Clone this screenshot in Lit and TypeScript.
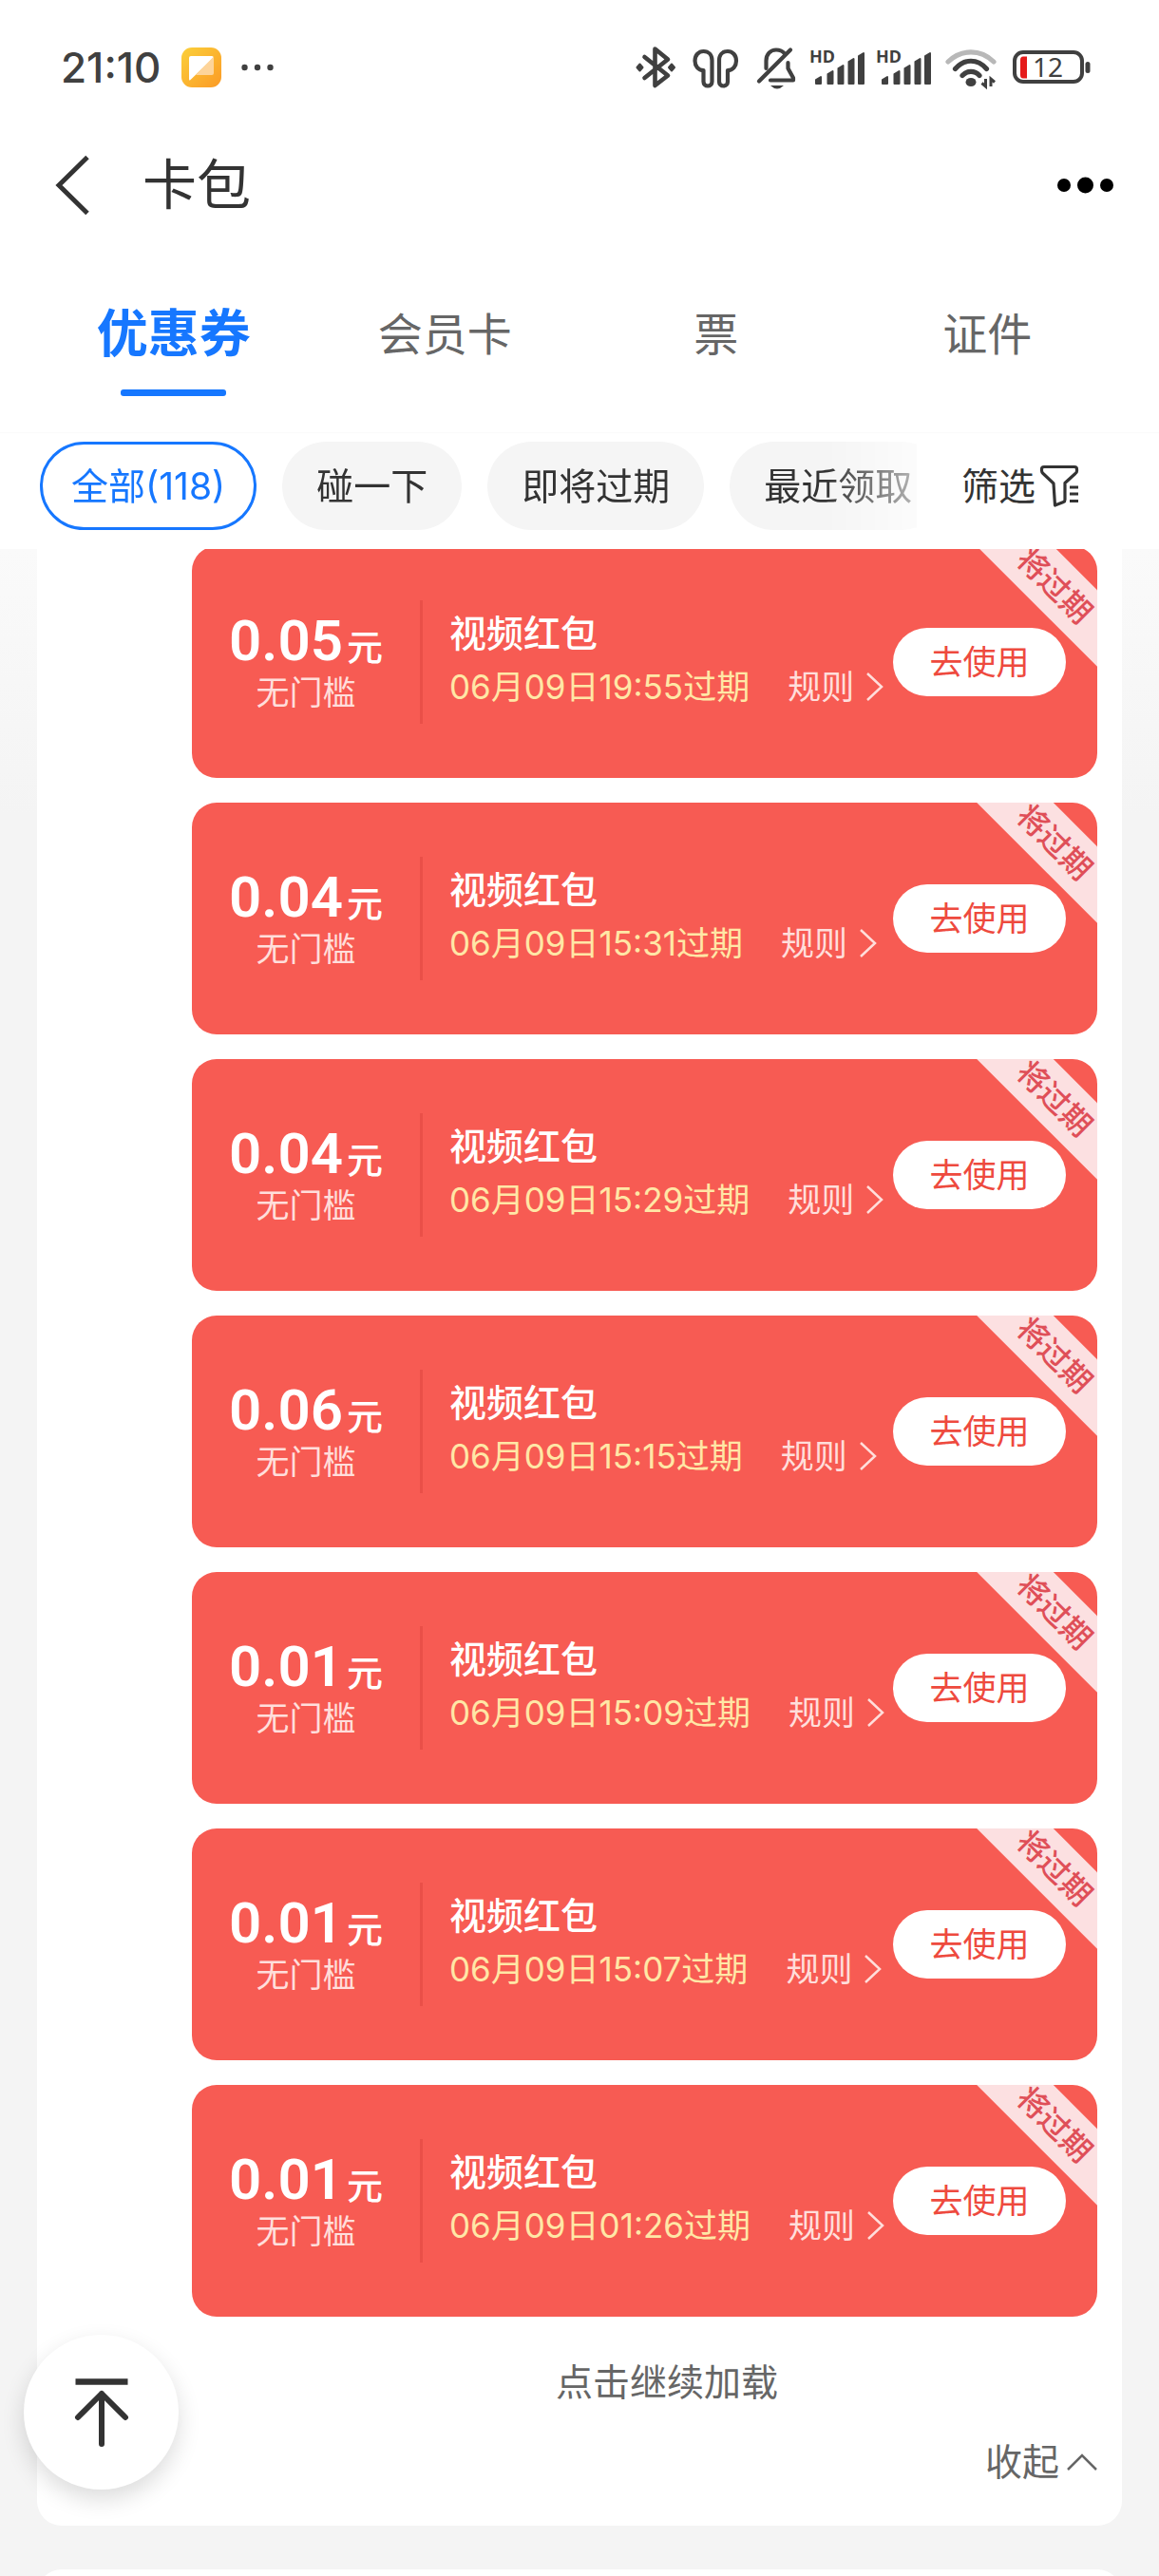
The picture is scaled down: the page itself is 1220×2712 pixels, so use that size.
import { LitElement, html, css, svg } from "lit";
import { customElement, property, state } from "lit/decorators.js";
import { classMap } from "lit/directives/class-map.js";

interface Coupon {
  amount: string;
  expires: string;
}

const COUPONS: Coupon[] = [
  { amount: "0.05", expires: "06月09日19:55过期" },
  { amount: "0.04", expires: "06月09日15:31过期" },
  { amount: "0.04", expires: "06月09日15:29过期" },
  { amount: "0.06", expires: "06月09日15:15过期" },
  { amount: "0.01", expires: "06月09日15:09过期" },
  { amount: "0.01", expires: "06月09日15:07过期" },
  { amount: "0.01", expires: "06月09日01:26过期" },
];

const TABS = ["优惠券", "会员卡", "票", "证件"];
const FILTERS = ["全部(118)", "碰一下", "即将过期", "最近领取"];

const resets = css`
  * {
    box-sizing: border-box;
  }
  button {
    margin: 0;
    padding: 0;
    border: 0;
    background: none;
    color: inherit;
    font: inherit;
    line-height: 48px;
    white-space: nowrap;
    cursor: pointer;
  }
  svg {
    display: block;
    flex: none;
  }
`;

@customElement("status-bar")
export class StatusBar extends LitElement {
  static styles = [
    resets,
    css`
      :host {
        display: flex;
        align-items: center;
        justify-content: space-between;
        height: 142px;
        padding: 0 72px 0 64px;
        color: #404040;
      }
      .left,
      .right {
        display: flex;
        align-items: center;
      }
      .right {
        gap: 12px;
      }
      .time {
        font-size: 44px;
        line-height: 48px;
        font-weight: 500;
        margin-right: 22px;
      }
      .app {
        margin-right: 20px;
      }
      .signal {
        overflow: visible;
      }
      .hd {
        font: 700 18px "Noto Sans", sans-serif;
      }
      .level {
        font: 400 28px "Noto Sans", sans-serif;
      }
    `,
  ];

  private signal() {
    return html`<svg class="signal" width="58" height="48" viewBox="0 0 58 48" fill="#404040">
      <text class="hd" x="0" y="19">HD</text>
      <g stroke="#404040" stroke-width="2" stroke-linejoin="round">
        ${[
          [7, 34],
          [19.5, 28],
          [30.5, 22],
          [41.5, 15],
          [52, 9],
        ].map(([x, y]) => svg`<path d="M${x} ${y + 3} L${x + 5} ${y} V41 H${x} Z" />`)}
      </g>
    </svg>`;
  }

  render() {
    return html`
      <div class="left">
        <span class="time">21:10</span>
        <svg class="app" width="42" height="42" viewBox="0 0 42 42">
          <defs>
            <linearGradient id="app" x1="0" y1="0" x2="1" y2="1">
              <stop offset="0" stop-color="#fbd03a" />
              <stop offset="1" stop-color="#fb9a26" />
            </linearGradient>
          </defs>
          <rect width="42" height="42" rx="11" fill="url(#app)" />
          <path d="M10 9 H32 Q34 9 33.500 11 L9 34.500 Q8 35 8 33 V11 Q8 9 10 9 Z" fill="#fff" />
          <path d="M34 9.500 L15 29 H32 Q34 29 34 27 Z" fill="#fdd49a" />
        </svg>
        <svg width="36" height="12" viewBox="0 0 36 12" fill="#404040">
          <circle cx="4.500" cy="6" r="3.200" />
          <circle cx="18" cy="6" r="3.200" />
          <circle cx="31.500" cy="6" r="3.200" />
        </svg>
      </div>
      <div class="right">
        <svg width="50" height="48" viewBox="0 0 50 48" fill="none" stroke="#404040" stroke-width="4.600" stroke-linecap="round" stroke-linejoin="round">
          <path d="M11.500 13 L36 32.500 L22.500 43 V4.500 L36 15.500 L11.500 35" />
          <path d="M6.500 20.500 L9.500 24 L6.500 27.500 L3.500 24 Z M40 20.500 L43 24 L40 27.500 L37 24 Z" fill="#404040" stroke-width="2" />
        </svg>
        <svg width="54" height="48" viewBox="0 0 54 48" fill="none" stroke="#404040" stroke-width="4.200" stroke-linejoin="round">
          <path d="M20.500 16.500 V39 a4.500 4.500 0 0 1 -9 0 V27 C6 27 2.500 22.500 2.500 17 C2.500 11 6.500 7 11.500 7 C17 7 20.500 11 20.500 16.500 Z" />
          <path d="M28 16.500 V39 a4.500 4.500 0 0 0 9 0 V27 C42.500 27 46 22.500 46 17 C46 11 42 7 37 7 C31.500 7 28 11 28 16.500 Z" />
        </svg>
        <svg width="45" height="48" viewBox="0 0 45 48" fill="none" stroke="#404040" stroke-width="4.200" stroke-linecap="round" stroke-linejoin="round">
          <path d="M11.500 25 V17 C11.500 10 16 5.500 22 5.500 C26 5.500 29 7 31 9.500" />
          <path d="M4 38.500 L37 5.500" />
          <path d="M34.500 19 V25 L40 35 V37.500 H16" />
          <path d="M16 43 H30 Q23 50 16 43 Z" fill="#404040" stroke="none" />
        </svg>
        ${this.signal()} ${this.signal()}
        <svg width="58" height="48" viewBox="0 0 58 48" fill="none" stroke="#404040" stroke-width="5.200" stroke-linecap="round">
          <path d="M6 18 C20 4.500 40 4.500 54 18" stroke="#b8b8b8" />
          <path d="M13.500 25.500 C23 14.500 37 14.500 46.500 25.500" />
          <path d="M21 32.500 C26 27 34 27 39 32.500" />
          <ellipse cx="30" cy="39.500" rx="5.500" ry="4.500" fill="#404040" stroke="none" />
          <path d="M45.500 36 V44 L41.500 40.500 M51 44 V36 L55 39.500" stroke-width="3" stroke-linecap="butt" />
        </svg>
        <svg width="86" height="48" viewBox="0 0 86 48">
          <rect x="6" y="8" width="71" height="31" rx="9" fill="none" stroke="#404040" stroke-width="4" />
          <path d="M15 12.500 H19 V35.500 H15 Q12 35.500 12 32 V16 Q12 12.500 15 12.500 Z" fill="#e51a1a" />
          <rect x="80.500" y="18" width="5" height="12" rx="2.500" fill="#404040" />
          <text class="level" x="25" y="34" fill="#404040">12</text>
        </svg>
      </div>
    `;
  }
}

@customElement("coupon-card")
export class CouponCard extends LitElement {
  @property() amount = "";
  @property() expires = "";

  static styles = [
    resets,
    css`
      :host {
        position: relative;
        display: flex;
        align-items: center;
        min-height: 244px;
        padding-right: 33px;
        border-radius: 26px;
        overflow: hidden;
        background: #f75b53;
        color: #fff;
        white-space: nowrap;
      }
      .value {
        flex: none;
        width: 240px;
        padding-top: 4px;
        text-align: center;
      }
      .price {
        display: flex;
        align-items: baseline;
        justify-content: center;
        gap: 4px;
        height: 60px;
        line-height: 60px;
        font-weight: 500;
      }
      .amount {
        font-family: Roboto, sans-serif;
        font-size: 60px;
        font-weight: 600;
      }
      .unit {
        font-size: 38px;
      }
      .threshold {
        font-size: 35px;
        line-height: 48px;
        color: #ffdedb;
      }
      .divider {
        flex: none;
        width: 3px;
        height: 130px;
        background: #e94f48;
      }
      .info {
        flex: 1;
        min-width: 0;
        padding: 0 0 4px 28px;
        line-height: 56px;
      }
      .name {
        font-size: 39px;
        font-weight: 500;
      }
      .meta {
        display: flex;
        align-items: center;
        gap: 40px;
        font-size: 35px;
      }
      .expires {
        color: #ffe7a6;
      }
      .rule {
        display: flex;
        align-items: center;
        gap: 12px;
        color: #ffdedb;
      }
      .use {
        position: relative;
        z-index: 1;
        flex: none;
        width: 182px;
        height: 72px;
        border-radius: 36px;
        background: #fff;
        color: #ee4a3e;
        font-size: 35px;
      }
      .ribbon {
        position: absolute;
        top: 13px;
        right: -55px;
        width: 200px;
        height: 57px;
        line-height: 57px;
        text-align: center;
        transform: rotate(45deg);
        background: #fce0e1;
        color: #df4f58;
        font-size: 32px;
        font-weight: 500;
      }
    `,
  ];

  render() {
    return html`
      <div class="value">
        <div class="price"><span class="amount">${this.amount}</span><span class="unit">元</span></div>
        <div class="threshold">无门槛</div>
      </div>
      <div class="divider"></div>
      <div class="info">
        <div class="name">视频红包</div>
        <div class="meta">
          <span class="expires">${this.expires}</span>
          <button class="rule">
            规则
            <svg width="20" height="32" viewBox="0 0 20 32" fill="none" stroke="#ffdedb" stroke-width="2.500">
              <path d="M2 2 L17 16 L2 30" />
            </svg>
          </button>
        </div>
      </div>
      <button class="use">去使用</button>
      <span class="ribbon">将过期</span>
    `;
  }
}

@customElement("app-root")
export class AppRoot extends LitElement {
  @state() private tab = 0;
  @state() private filter = 0;

  static styles = [
    resets,
    css`
      :host {
        position: relative;
        display: flex;
        flex-direction: column;
        height: 100vh;
        overflow: hidden;
        background: #fff;
        color: #333;
        font-family: Inter, "Noto Sans CJK SC", sans-serif;
      }
      .nav {
        display: flex;
        align-items: center;
        height: 106px;
        padding: 0 44px 0 54px;
      }
      .title {
        flex: 1;
        margin: 0 0 0 50px;
        font-size: 57px;
        line-height: 64px;
        font-weight: 400;
      }
      .tabs {
        display: flex;
        padding: 0 38px 0 40px;
        border-bottom: 1px solid #fafafa;
      }
      .tab {
        flex: 1;
        display: flex;
        flex-direction: column;
        align-items: center;
        gap: 28px;
        padding: 74px 0 38px;
        color: #666;
        font-size: 47px;
        line-height: 60px;
      }
      .tab::after {
        content: "";
        width: 111px;
        height: 7px;
        border-radius: 3px;
      }
      .tab.on {
        color: #1677ff;
        font-size: 54px;
        font-weight: 700;
      }
      .tab.on::after {
        background: #1677ff;
      }
      .filters {
        display: flex;
        align-items: center;
        padding: 9px 0 20px 42px;
        font-size: 39px;
      }
      .chips {
        flex: 1;
        min-width: 0;
        display: flex;
        gap: 27px;
        overflow: hidden;
        -webkit-mask-image: linear-gradient(to right, #000 calc(100% - 96px), rgba(0, 0, 0, 0.35));
        mask-image: linear-gradient(to right, #000 calc(100% - 96px), rgba(0, 0, 0, 0.35));
      }
      .chip {
        flex: none;
        height: 93px;
        padding: 0 36px;
        border-radius: 47px;
        background: #f5f5f5;
      }
      .chip.on {
        padding: 0 30px;
        border: 3px solid #1677ff;
        background: #fff;
        color: #1677ff;
      }
      .sift {
        display: flex;
        align-items: center;
        gap: 2px;
        padding: 0 80px 0 47px;
      }
      .scroll {
        flex: 1;
        min-height: 0;
        overflow-y: auto;
        scrollbar-width: none;
        background: linear-gradient(#fafafa, #f4f4f4 280px);
      }
      .panel {
        margin: 0 39px;
        padding: 0 26px 25px 163px;
        overflow: hidden;
        border-radius: 0 0 26px 26px;
        background: #fff;
      }
      .list {
        display: flex;
        flex-direction: column;
        gap: 26px;
        margin: -3px 0 27px;
      }
      .more,
      .fold {
        display: flex;
        align-items: center;
        height: 84px;
        color: #666;
        font-size: 39px;
      }
      .more {
        justify-content: center;
        width: 100%;
        padding-left: 47px;
      }
      .fold {
        gap: 8px;
        margin-left: auto;
      }
      .next {
        height: 120px;
        margin: 46px 39px 0;
        border-radius: 26px;
        background: #fff;
      }
      .top {
        position: absolute;
        left: 25px;
        bottom: 91px;
        display: grid;
        place-items: center;
        width: 163px;
        height: 163px;
        border-radius: 50%;
        background: #fff;
        box-shadow: 0 10px 24px rgba(0, 0, 0, 0.14);
      }
    `,
  ];

  render() {
    return html`
      <status-bar></status-bar>
      <header class="nav">
        <button aria-label="返回">
          <svg width="46" height="64" viewBox="0 0 46 64" fill="none" stroke="#333" stroke-width="5">
            <path d="M38 2.500 L8 32 L38 61.500" />
          </svg>
        </button>
        <h1 class="title">卡包</h1>
        <button aria-label="更多">
          <svg width="66" height="20" viewBox="0 0 66 20">
            <circle cx="10" cy="10" r="7" />
            <circle cx="32.500" cy="10" r="8.500" />
            <circle cx="55" cy="10" r="7" />
          </svg>
        </button>
      </header>
      <nav class="tabs">
        ${TABS.map(
          (name, i) =>
            html`<button class=${classMap({ tab: true, on: i === this.tab })} @click=${() => (this.tab = i)}>${name}</button>`,
        )}
      </nav>
      <div class="filters">
        <div class="chips">
          ${FILTERS.map(
            (name, i) =>
              html`<button class=${classMap({ chip: true, on: i === this.filter })} @click=${() => (this.filter = i)}>${name}</button>`,
          )}
        </div>
        <button class="sift">
          筛选
          <svg width="48" height="48" viewBox="0 0 48 48" fill="none" stroke="#333" stroke-width="3.200" stroke-linejoin="round">
            <path d="M7 3.500 H39 Q41.500 3.500 41.500 6 V8 Q41.500 9.500 40 10.500 L29 20.500 V38 Q29 40 27.500 40.500 L18.500 44 L17 21 L6 10.500 Q4.500 9 4.500 7.500 V6 Q4.500 3.500 7 3.500 Z" />
            <path d="M34 25 H43 M34 32 H43 M34 39.500 H43" />
          </svg>
        </button>
      </div>
      <main class="scroll">
        <section class="panel">
          <div class="list">
            ${COUPONS.map((c) => html`<coupon-card amount=${c.amount} expires=${c.expires}></coupon-card>`)}
          </div>
          <button class="more">点击继续加载</button>
          <button class="fold">
            收起
            <svg width="32" height="20" viewBox="0 0 32 20" fill="none" stroke="#666" stroke-width="2.500">
              <path d="M1 18 L16 3 L31 18" />
            </svg>
          </button>
        </section>
        <section class="next"></section>
      </main>
      <button class="top" aria-label="回到顶部">
        <svg width="60" height="76" viewBox="0 0 60 76" fill="none" stroke="#333" stroke-width="6" stroke-linecap="round" stroke-linejoin="round">
          <path d="M2.500 5.500 H57.500" stroke-linecap="butt" stroke-width="6.500" />
          <path d="M30 18 V71 M5 43 L30 18 L55 43" />
        </svg>
      </button>
    `;
  }
}
